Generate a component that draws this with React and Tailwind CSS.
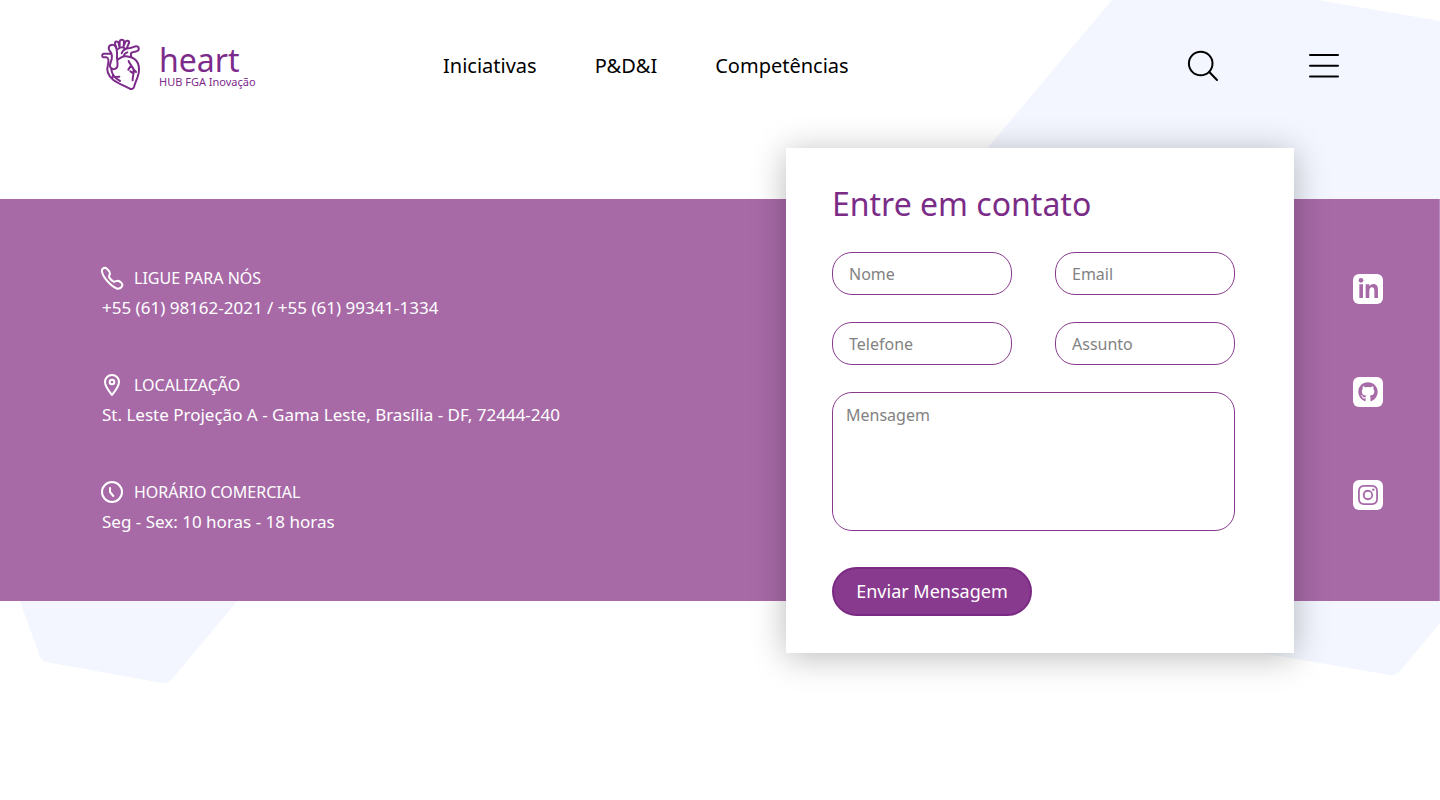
import { FaGithub } from "react-icons/fa";
import { BsInstagram } from "react-icons/bs";

const navLinks = ["Iniciativas", "P&D&I", "Competências"];

function HeartLogo() {
  return (
    <svg
      viewBox="30 24 123 159"
      className="h-[53px] w-[41px] shrink-0"
      fill="none"
      stroke="currentColor"
      strokeWidth="6"
      strokeLinecap="round"
      strokeLinejoin="round"
      aria-hidden="true"
    >
      <path d="M61 71H41C35 73 35 81 41 82H50C56 84 56 94 54 103C48 123 56 139 70 150C86 161 104 168 118 175C124 179 130 177 132 171C137 152 148 136 147 118C147 104 142 93 132 86C122 80 104 76 94 82L84 88" />
      <path d="M64 70C62 65 56 62 56 54C57 44 69 41 76 49C83 58 81 72 81 84C82 94 84 103 82 110C78 120 66 119 61 112C57 104 63 96 65 88C67 80 66 75 64 70" />
      <path d="M79 52L75 42C74 33 84 32 86 40L88 50M89 47V35C90 27 101 27 102 35L101 48M102 46L106 36C109 29 119 32 117 39L111 53" />
      <path d="M95 70C98 59 108 55 120 54C128 53 132 49 139 49C147 49 149 60 142 63C137 66 132 64 125 68C121 71 122 75 124 80M84 57C92 50 98 50 104 55M102 78C102 72 106 69 112 67" />
      <path d="M64 119C66 134 75 145 90 153M69 135L67 144M75 141L88 140M116 93C118 104 130 108 131 121C132 132 127 140 128 151M123 107L115 119M131 118L138 126M130 130L121 124" />
    </svg>
  );
}

function PhoneIcon() {
  return (
    <svg viewBox="30 33 72 72" className="size-6" fill="none" stroke="currentColor" strokeWidth="6" strokeLinejoin="round" aria-hidden="true">
      <path d="M36 50C34 43 40 38 46 38C53 42 61 51 60 57C58 61 55 63 58 68C62 74 67 78 71 80C76 81 79 77 84 77C91 79 98 86 97 91C95 97 89 101 82 101C67 97 39 69 36 50Z" />
    </svg>
  );
}

function PinIcon() {
  return (
    <svg viewBox="30 30 72 72" className="size-6" fill="none" stroke="currentColor" strokeWidth="6" strokeLinejoin="round" aria-hidden="true">
      <path d="M66 96C58 86 45 70 45 57A21 21 0 0 1 87 57C87 70 74 86 66 96Z" />
      <circle cx="66" cy="57" r="7" />
    </svg>
  );
}

function ClockIcon() {
  return (
    <svg viewBox="30 30 72 72" className="size-6" fill="none" stroke="currentColor" strokeWidth="6" strokeLinecap="round" strokeLinejoin="round" aria-hidden="true">
      <circle cx="66" cy="66" r="30" />
      <path d="M60 54V66L70 78" />
    </svg>
  );
}

function LinkedinIcon({ className }) {
  return (
    <svg viewBox="0 0 90 90" className={className} fill="currentColor" aria-hidden="true">
      <circle cx="24" cy="19" r="7" />
      <path d="M19 31H30V72H19ZM38 31H49V37C52 32 57 30 61 30C71 30 75 37 75 48V72H64V51C64 44 62 40 57 40C52 40 49 44 49 51V72H38Z" />
    </svg>
  );
}

const contacts = [
  { Icon: PhoneIcon, title: "LIGUE PARA NÓS", text: "+55 (61) 98162-2021 / +55 (61) 99341-1334" },
  { Icon: PinIcon, title: "LOCALIZAÇÃO", text: "St. Leste Projeção A - Gama Leste, Brasília - DF, 72444-240" },
  { Icon: ClockIcon, title: "HORÁRIO COMERCIAL", text: "Seg - Sex: 10 horas - 18 horas" },
];

const socials = [
  { Icon: LinkedinIcon, name: "LinkedIn", size: "size-[30px]" },
  { Icon: FaGithub, name: "GitHub", size: "size-5" },
  { Icon: BsInstagram, name: "Instagram", size: "size-5" },
];

const fields = [
  { id: "nome", label: "Nome", type: "text" },
  { id: "email", label: "Email", type: "email" },
  { id: "telefone", label: "Telefone", type: "tel" },
  { id: "assunto", label: "Assunto", type: "text" },
];

function Background() {
  return (
    <>
      <svg className="pointer-events-none absolute top-0 right-0 -z-10 h-[700px] w-[520px]" viewBox="0 0 520 700" fill="#f3f6fe" aria-hidden="true">
        <path d="M192 0H398L520 21V623L480 671Q476 676 470 675L300 646L0 228Z" />
      </svg>
      <svg className="pointer-events-none absolute top-[560px] left-0 -z-10 h-[140px] w-[280px]" viewBox="0 0 280 140" fill="#f3f6fe" aria-hidden="true">
        <path d="M5 0H272L172 119Q168 124 162 123L46 102Q42 101 40 97Z" />
      </svg>
    </>
  );
}

function Header() {
  return (
    <header className="flex h-[148px] items-start px-[100px]">
      <a href="#inicio" className="mt-[38px] flex w-[343px] shrink-0 text-[#7d2b8b]">
        <HeartLogo />
        <span className="flex flex-col pt-[6px] pl-[18px]">
          <span className="text-[32px] leading-8">heart</span>
          <span className="text-[11px] leading-[12px] whitespace-nowrap">HUB FGA Inovação</span>
        </span>
      </a>
      <nav className="mt-[50px] flex gap-[58px] text-xl leading-8 text-black">
        {navLinks.map((label) => (
          <a key={label} href="#nav" className="whitespace-nowrap">
            {label}
          </a>
        ))}
      </nav>
      <div className="mt-[49px] ml-auto flex gap-[88px]">
        <button type="button" aria-label="Buscar" className="cursor-pointer">
          <svg viewBox="0 0 33 33" className="size-[33px]" fill="none" stroke="black" strokeWidth="2" strokeLinecap="round">
            <circle cx="13.700" cy="14.500" r="11.800" />
            <path d="M22.300 23L30 31" />
          </svg>
        </button>
        <button type="button" aria-label="Menu" className="cursor-pointer">
          <svg viewBox="0 0 32 33" className="h-[33px] w-8" fill="none" stroke="black" strokeWidth="2" strokeLinecap="round">
            <path d="M2 6H30M2 16.700H30M2 27.400H30" />
          </svg>
        </button>
      </div>
    </header>
  );
}

function ContactForm() {
  return (
    <form
      className="-mt-[51px] -mb-[52px] flex w-[508px] shrink-0 flex-col bg-white pt-[34px] pr-[59px] pb-[37px] pl-[46px] shadow-[0_4px_32px_rgba(0,0,0,0.27)]"
      onSubmit={(e) => e.preventDefault()}
    >
      <h1 className="text-[32px] leading-[44px] text-[#7b2c87]">Entre em contato</h1>
      <div className="mt-[26px] grid grid-cols-2 gap-x-[43px] gap-y-[27px]">
        {fields.map(({ id, label, type }) => (
          <input
            key={id}
            id={id}
            name={id}
            type={type}
            aria-label={label}
            placeholder={label}
            className="h-[43px] w-full rounded-[20px] border border-[#883a8e] bg-white px-4 text-base text-black placeholder:text-[#828282]"
          />
        ))}
      </div>
      <textarea
        id="mensagem"
        name="mensagem"
        aria-label="Mensagem"
        placeholder="Mensagem"
        className="mt-[27px] h-[139px] resize-none rounded-[20px] border border-[#883a8e] bg-white px-[13px] py-[10px] text-base text-black placeholder:text-[#828282]"
      />
      <button
        type="submit"
        className="mt-9 h-[49px] w-[200px] cursor-pointer rounded-full border-2 border-[#7b2a84] bg-[#883a8e] pb-[2px] text-lg text-white"
      >
        Enviar Mensagem
      </button>
    </form>
  );
}

export default function App() {
  return (
    <div className="relative isolate min-h-screen overflow-x-hidden bg-white font-['Noto_Sans',sans-serif]">
      <Background />
      <Header />
      <main className="mt-[51px] flex border-r border-[#b98bbd] bg-[#a76aa7] pr-14 pl-[100px]">
        <section className="flex flex-1 flex-col gap-[53px] pt-[67px] pb-16 text-white">
          {contacts.map(({ Icon, title, text }) => (
            <div key={title}>
              <h2 className="flex items-center gap-[10px] text-base leading-6">
                <Icon />
                {title}
              </h2>
              <p className="mt-[6px] pl-[2px] text-[17px] leading-6">{text}</p>
            </div>
          ))}
        </section>
        <ContactForm />
        <aside className="ml-[59px] flex flex-col gap-[73px] pt-[75px]">
          {socials.map(({ Icon, name, size }) => (
            <a key={name} href="#social" aria-label={name} className="flex size-[30px] items-center justify-center rounded-md bg-white text-[#a76aa7]">
              <Icon className={size} />
            </a>
          ))}
        </aside>
      </main>
    </div>
  );
}
